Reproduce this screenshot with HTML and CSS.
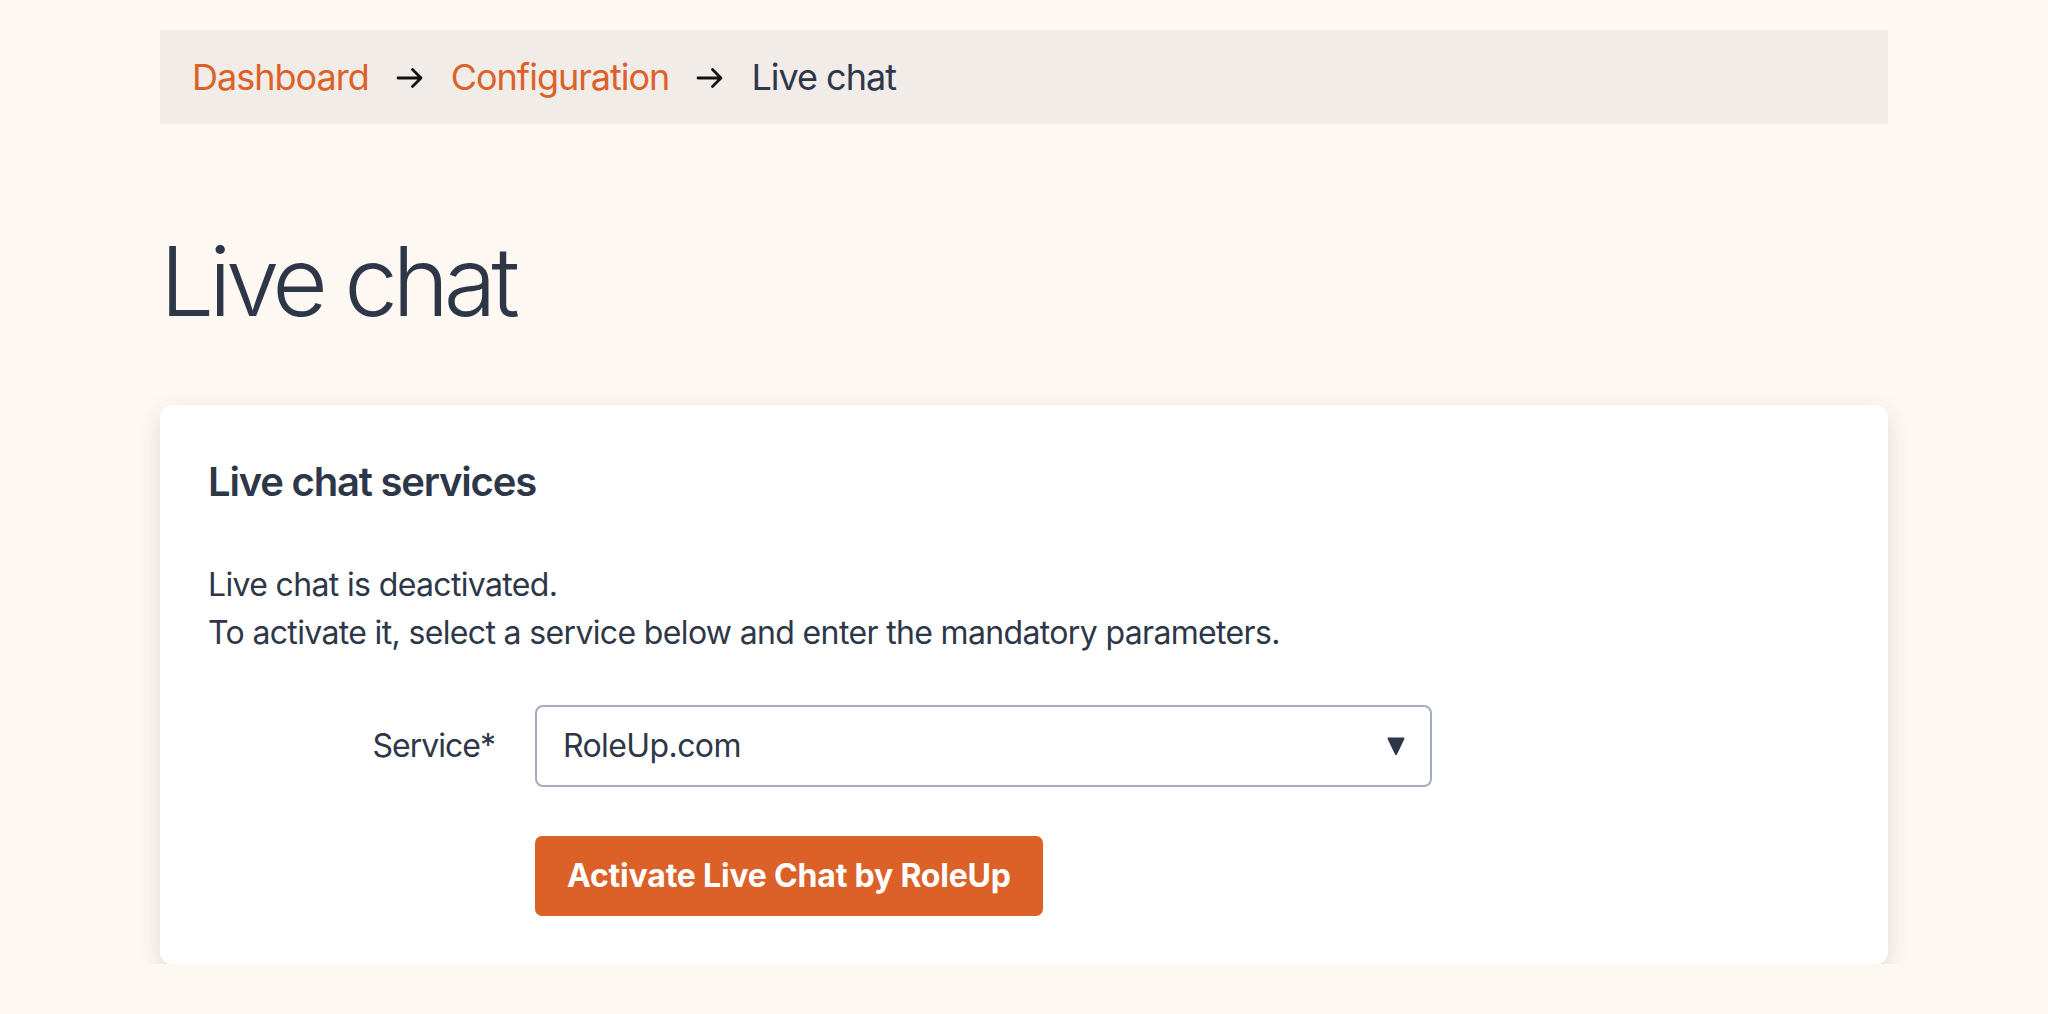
FILE: index.html
```html
<!DOCTYPE html>
<html lang="en">
<head>
<meta charset="utf-8">
<title>Live chat</title>
<link rel="stylesheet" href="styles.css">
</head>
<body>
<div class="page">
  <nav class="breadcrumb">
    <a class="crumb-link" href="#">Dashboard</a>
    <svg class="crumb-arrow" viewBox="0 0 28 24" width="28" height="24"><path d="M2 12H25M16.5 3.5L25 12L16.5 20.5" fill="none" stroke="#111" stroke-width="2.8" stroke-linecap="round" stroke-linejoin="round"/></svg>
    <a class="crumb-link" href="#">Configuration</a>
    <svg class="crumb-arrow" viewBox="0 0 28 24" width="28" height="24"><path d="M2 12H25M16.5 3.5L25 12L16.5 20.5" fill="none" stroke="#111" stroke-width="2.8" stroke-linecap="round" stroke-linejoin="round"/></svg>
    <span class="crumb-current">Live chat</span>
  </nav>

  <h1 class="page-title">Live chat</h1>

  <section class="card">
    <h2 class="card-title">Live chat services</h2>
    <p class="card-text">Live chat is deactivated.<br>To activate it, select a service below and enter the mandatory parameters.</p>
    <div class="form-row">
      <label class="form-label">Service*</label>
      <div class="select">
        <span class="select-value">RoleUp.com</span>
        <svg class="select-caret" viewBox="0 0 20 20" width="20" height="20"><path d="M2.5 2.5H17.5L10 18Z" fill="#2d3748" stroke="#2d3748" stroke-width="2" stroke-linejoin="round"/></svg>
      </div>
    </div>
    <div class="form-row">
      <span class="form-label"></span>
      <button class="btn">Activate Live Chat by RoleUp</button>
    </div>
  </section>
</div>
</body>
</html>
```

FILE: styles.css
```css
html, body {
  margin: 0;
  padding: 0;
}

body {
  background: #fdf8f2;
  font-family: Inter, "Noto Sans", "Liberation Sans", sans-serif;
  color: #2d3748;
}

.page {
  width: 1728px;
  margin: 0 auto;
  padding-top: 30px;
}

.breadcrumb {
  display: flex;
  align-items: center;
  gap: 27px;
  background: #f1ece8;
  padding: 24px 32px;
  font-size: 36px;
  line-height: 46px;
  letter-spacing: -1px;
}

.crumb-link {
  color: #dc6129;
  text-decoration: none;
}

.crumb-arrow {
  display: block;
  margin-top: 2px;
}

.crumb-current {
  color: #2d3748;
}

.page-title {
  margin: 100px 0 66px;
  font-size: 96px;
  font-weight: 300;
  line-height: 115px;
  letter-spacing: -5.3px;
}

.card {
  background: #ffffff;
  border-radius: 12px;
  padding: 48px;
  box-shadow: 0 8px 24px rgba(70, 50, 30, 0.15);
}

.card-title {
  margin: 0 0 50px;
  font-size: 40px;
  font-weight: 600;
  line-height: 58px;
  letter-spacing: -1.2px;
}

.card-text {
  margin: 0 0 48px;
  font-size: 32px;
  line-height: 48px;
  letter-spacing: -0.65px;
}

.form-row {
  display: flex;
  align-items: center;
  gap: 40px;
}

.form-row + .form-row {
  margin-top: 49px;
}

.form-label {
  width: 287px;
  text-align: right;
  font-size: 32px;
  line-height: 48px;
  letter-spacing: -1px;
}

.select {
  width: 897px;
  box-sizing: border-box;
  display: flex;
  align-items: center;
  justify-content: space-between;
  border: 2px solid #a3adbe;
  border-radius: 8px;
  padding: 15px 24px 15px 26px;
  font-size: 32px;
  line-height: 48px;
  letter-spacing: -0.6px;
  background: #fff;
}

.select-caret {
  display: block;
}

.btn {
  font-family: Inter, "Noto Sans", "Liberation Sans", sans-serif;
  background: #dc6129;
  color: #ffffff;
  border: 0;
  border-radius: 7px;
  padding: 16px 32px;
  font-size: 32px;
  font-weight: 700;
  line-height: 48px;
  letter-spacing: -0.2px;
}
```
